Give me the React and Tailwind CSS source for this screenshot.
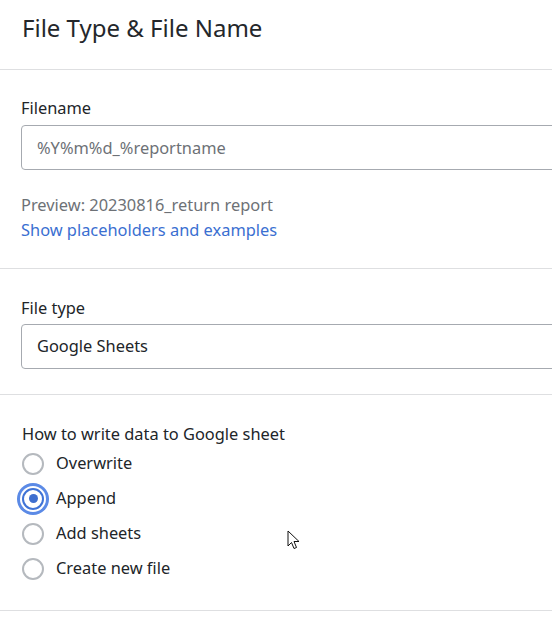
const Radio = ({ label, checked }) => (
  <label className="flex items-center h-[35px] gap-3 cursor-pointer">
    <span
      className={`relative flex items-center justify-center w-[22px] h-[22px] rounded-full border-2 bg-white ${
        checked ? 'border-[#3f73d6] ring-[3px] ring-[#5b8ae6] ring-offset-[2px]' : 'border-[#b5b9be]'
      }`}
    >
      {checked && <span className="w-[9px] h-[9px] rounded-full bg-[#3f6fcf]" />}
    </span>
    <span className="text-[16.4px] text-[#212529]">{label}</span>
  </label>
);

const Divider = () => <div className="border-t border-[#dedfe1]" />;

export default function App() {
  const options = ['Overwrite', 'Append', 'Add sheets', 'Create new file'];
  return (
    <div
      className="relative w-[552px] h-[619px] overflow-hidden bg-white text-[#212529]"
      style={{ fontFamily: '"Noto Sans", "Open Sans", sans-serif' }}
    >
      <div className="h-[69px] pt-[12px] pl-[22px]">
        <h1 className="text-[24px] leading-8 font-normal text-[#24272b]">File Type &amp; File Name</h1>
      </div>
      <Divider />

      <div className="pl-[21px] pt-[26px] pb-[26px]">
        <p className="text-[16.4px] leading-6 mb-[5px]">Filename</p>
        <div className="w-[600px] h-[45px] flex items-center px-[15px] pt-[1px] border border-[#a6aab0] rounded-[4px] text-[16.4px] text-[#6d7176]">
          %Y%m%d_%reportname
        </div>
        <p className="mt-[22px] text-[16.4px] leading-[26px] text-[#6d7176]">Preview: 20230816_return report</p>
        <a className="block text-[16.4px] leading-6 text-[#3a6fd1]">Show placeholders and examples</a>
      </div>
      <Divider />

      <div className="pl-[21px] pt-[27px] pb-[25px]">
        <p className="text-[16.4px] leading-6 mb-[4px]">File type</p>
        <div className="w-[600px] h-[45px] flex items-center px-[15px] border border-[#a6aab0] rounded-[4px] text-[16.4px] text-[#212529]">
          Google Sheets
        </div>
      </div>
      <Divider />

      <div className="pl-[22px] pt-[27px] pb-[24px]">
        <p className="text-[16.4px] leading-6">How to write data to Google sheet</p>
        {options.map((o) => (
          <Radio key={o} label={o} checked={o === 'Append'} />
        ))}
      </div>
      <Divider />

      <svg className="absolute left-[287px] top-[530px]" width="13" height="20" viewBox="0 0 13 20">
        <path d="M1 1 L1 16 L4.5 12.5 L7 18.5 L9.5 17.5 L7 11.5 L12 11.5 Z" fill="white" stroke="#111" strokeWidth="1" strokeLinejoin="round" />
      </svg>
    </div>
  );
}
